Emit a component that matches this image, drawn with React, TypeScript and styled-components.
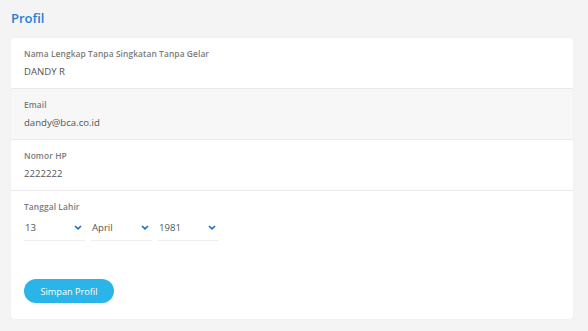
import * as React from "react";
import styled, { createGlobalStyle } from "styled-components";

const GlobalStyle = createGlobalStyle`
  html, body {
    margin: 0;
    padding: 0;
    background: #f4f4f4;
    font-family: "Open Sans", "Noto Sans", sans-serif;
  }
`;

const Page = styled.div`
  padding: 9px 15px 12px 11px;
`;

const Heading = styled.h1`
  margin: 0 0 11px;
  font-size: 13px;
  line-height: 18px;
  font-weight: 600;
  color: #1e80d8;
`;

const Card = styled.div`
  background: #fff;
  border-radius: 4px;
  box-shadow: 0 0 1px rgba(0, 0, 0, 0.08);
  overflow: hidden;
`;

const Field = styled.div<{ $shaded?: boolean }>`
  padding: 10px 13px 12px;
  height: 51px;
  box-sizing: border-box;
  background: ${(p) => (p.$shaded ? "#f7f7f7" : "#fff")};
  border-bottom: 1px solid #ebebeb;
`;

const DateField = styled.div`
  padding: 10px 13px 16px;
  height: 128px;
  box-sizing: border-box;
`;

const Label = styled.div`
  font-size: 8.4px;
  line-height: 12px;
  font-weight: 600;
  color: #7a7a7a;
  letter-spacing: 0.1px;
`;

const Value = styled.div`
  margin-top: 5px;
  font-size: 9.6px;
  line-height: 14px;
  color: #555;
`;

const SelectRow = styled.div`
  display: flex;
  gap: 6px;
  margin-top: 2px;
`;

const Select = styled.div`
  width: 61px;
  height: 26px;
  box-sizing: border-box;
  display: flex;
  align-items: center;
  justify-content: space-between;
  padding: 0 3px 0 1px;
  border-bottom: 1px solid #eeeeee;
  font-size: 9.6px;
  color: #555;
`;

const Button = styled.button`
  margin-top: 38px;
  width: 90px;
  height: 24px;
  border: none;
  border-radius: 12px;
  background: #2ab4e8;
  color: #fff;
  font-family: "Open Sans", "Noto Sans", sans-serif;
  font-size: 9.2px;
  font-weight: 500;
  padding: 0;
`;

function Chevron() {
  return (
    <svg width="8" height="5" viewBox="0 0 8 5">
      <path d="M1 1 L4 3.8 L7 1" fill="none" stroke="#1f6fc0" strokeWidth="1.7" />
    </svg>
  );
}

export default function App() {
  return (
    <Page>
      <GlobalStyle />
      <Heading>Profil</Heading>
      <Card>
        <Field>
          <Label>Nama Lengkap Tanpa Singkatan Tanpa Gelar</Label>
          <Value>DANDY R</Value>
        </Field>
        <Field $shaded>
          <Label>Email</Label>
          <Value>dandy@bca.co.id</Value>
        </Field>
        <Field>
          <Label>Nomor HP</Label>
          <Value>2222222</Value>
        </Field>
        <DateField>
          <Label>Tanggal Lahir</Label>
          <SelectRow>
            <Select>
              13 <Chevron />
            </Select>
            <Select>
              April <Chevron />
            </Select>
            <Select>
              1981 <Chevron />
            </Select>
          </SelectRow>
          <Button>Simpan Profil</Button>
        </DateField>
      </Card>
    </Page>
  );
}
